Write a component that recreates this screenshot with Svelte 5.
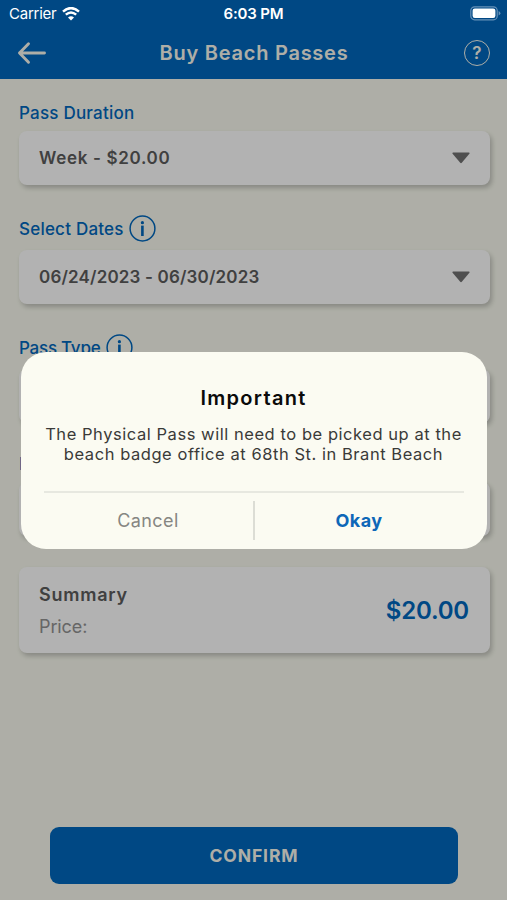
<script lang="ts">
    // Single selectable field shown on the form
    interface PassField {
        label: string,
        value: string,
        hasInfo: boolean,
        size: string
    }

    const fields: PassField[] = [
        { label: "Pass Duration", value: "Week - $20.00", hasInfo: false, size: "duration" },
        { label: "Select Dates", value: "06/24/2023 - 06/30/2023", hasInfo: true, size: "dates" },
        { label: "Pass Type", value: "", hasInfo: true, size: "type" },
        { label: "No.", value: "", hasInfo: false, size: "amount" }
    ];

    const price = "$20.00";

    let dialogOpen = true;

    function closeDialog() {
        dialogOpen = false;
    }
</script>

<div class="screen">
    <!-- System status bar stays above the dimmed page -->
    <div class="status-bar">
        <div class="carrier">
            <span>Carrier</span>
            <svg width="18" height="14" viewBox="0 0 18 14" fill="none" stroke="white">
                <path d="M1 4.6 Q9 -2.4 17 4.6" stroke-width="2.5" />
                <path d="M3.8 7.7 Q9 3.1 14.2 7.7" stroke-width="2.4" />
                <path d="M9 13.6 L6 10.6 Q9 8 12 10.6 Z" fill="white" stroke="none" />
            </svg>
        </div>
        <span class="time">6:03 PM</span>
        <svg class="battery" width="31" height="15" viewBox="0 0 31 15">
            <rect x="0.8" y="0.8" width="26.4" height="13" rx="3.8" fill="none" stroke="#6691b8" stroke-width="1.2" />
            <rect x="2.6" y="2.6" width="22.8" height="9.4" rx="2.2" fill="white" />
            <path d="M28.6 5 Q30.4 5.8 30.4 7.3 Q30.4 8.8 28.6 9.6 Z" fill="#6691b8" />
        </svg>
    </div>

    <header>
        <button class="icon-button" aria-label="Back">
            <svg width="30" height="24" viewBox="0 0 30 24" fill="none" stroke="#fafaf0" stroke-width="2.9" stroke-linecap="round" stroke-linejoin="round">
                <path d="M27.5 12 H2.5 M11.5 2.8 L2.5 12 L11.5 21.2" />
            </svg>
        </button>
        <h1>Buy Beach Passes</h1>
        <button class="help" aria-label="Help">?</button>
    </header>

    <main>
        {#each fields as field}
            <div class="field {field.size}">
                <div class="label" class:with-info={field.hasInfo}>
                    <span>{field.label}</span>
                    {#if field.hasInfo}
                        <svg width="27" height="27" viewBox="0 0 27 27">
                            <circle cx="13.5" cy="13.5" r="12.4" fill="none" stroke="#0067bd" stroke-width="1.5" />
                            <rect x="12.1" y="10.6" width="2.6" height="10.4" fill="#0067bd" />
                            <circle cx="13.4" cy="7.7" r="1.6" fill="#0067bd" />
                        </svg>
                    {/if}
                </div>
                <div class="card select">
                    <span>{field.value}</span>
                    <svg width="18" height="12" viewBox="0 0 18 12">
                        <path d="M1 0.5 H17 Q18 0.8 17.4 1.7 L10 10.6 Q9 11.8 8 10.6 L0.6 1.7 Q0 0.8 1 0.5 Z" fill="#727272" />
                    </svg>
                </div>
            </div>
        {/each}

        <div class="card summary">
            <div class="texts">
                <h2>Summary</h2>
                <p>Price:</p>
            </div>
            <span class="price">{price}</span>
        </div>
    </main>

    <button class="confirm">CONFIRM</button>

    {#if dialogOpen}
        <div class="backdrop">
            <div class="dialog" role="dialog">
                <h3>Important</h3>
                <p>The Physical Pass will need to be picked up at the<br>beach badge office at 68th St. in Brant Beach</p>
                <div class="actions">
                    <button class="cancel" on:click={closeDialog}>Cancel</button>
                    <button class="okay" on:click={closeDialog}>Okay</button>
                </div>
            </div>
        </div>
    {/if}
</div>

<style>
    :global(body) {
        margin: 0;
    }

    .screen {
        position: relative;
        width: 100%;
        height: 900px;
        display: flex;
        flex-direction: column;
        overflow: hidden;
        background-color: #f9faef;
        font-family: Inter, "Liberation Sans", sans-serif;
    }

    h1, h2, h3, p {
        margin: 0;
    }

    button {
        padding: 0;
        border: none;
        background: none;
        font-family: inherit;
    }

    .status-bar {
        position: absolute;
        inset: 0 0 auto 0;
        z-index: 2;
        height: 27px;
        padding: 0 6px 0 9px;
        box-sizing: border-box;
        display: grid;
        grid-template-columns: 1fr auto 1fr;
        align-items: center;
        color: white;
        font-size: 15px;
    }

    .carrier {
        display: flex;
        align-items: center;
        gap: 6px;
        letter-spacing: -0.25px;
    }

    .time {
        margin-right: 3px;
        font-weight: 600;
        letter-spacing: -0.15px;
    }

    .battery {
        justify-self: end;
    }

    header {
        height: 79px;
        padding: 26px 17px 0;
        box-sizing: border-box;
        display: flex;
        align-items: center;
        justify-content: space-between;
        background-color: #0067bd;
        flex-shrink: 0;
    }

    .icon-button {
        display: flex;
    }

    h1 {
        margin-right: 3px;
        color: #fafaf0;
        font-size: 20px;
        font-weight: 600;
        letter-spacing: 0.75px;
    }

    .help {
        width: 26px;
        height: 26px;
        box-sizing: border-box;
        border: solid 1.5px #fafaf0;
        border-radius: 50%;
        color: #fafaf0;
        font-size: 17px;
        font-weight: 600;
        line-height: 22px;
    }

    main {
        flex: 1;
        padding: 23px 17px 0 19px;
        display: flex;
        flex-direction: column;
        gap: 30.8px;
    }

    .label {
        height: 22px;
        margin-bottom: 7px;
        display: flex;
        align-items: center;
        gap: 5px;
        color: #0067bd;
        font-size: 17px;
        font-weight: 500;
        letter-spacing: 0.22px;
    }

    .label.with-info {
        height: 26px;
        margin-bottom: 8px;
    }

    .type .label {
        gap: 6px;
        letter-spacing: -0.25px;
    }

    .card {
        box-sizing: border-box;
        display: flex;
        align-items: center;
        justify-content: space-between;
        background-color: white;
        border-radius: 8px;
        box-shadow: 2px 3px 5px rgba(0, 0, 0, 0.22);
    }

    .select {
        height: 54px;
        padding: 0 20px;
        color: #5c5c5c;
        font-size: 17px;
        font-weight: 600;
        letter-spacing: 0.17px;
    }

    .duration .select {
        letter-spacing: 0.68px;
    }

    .summary {
        height: 86px;
        padding: 1px 21px 0 20px;
    }

    .summary h2 {
        color: #5c5c5c;
        font-size: 18px;
        font-weight: 600;
        line-height: 32px;
        letter-spacing: 0.75px;
    }

    .summary p {
        color: #929292;
        font-size: 18px;
        line-height: 32px;
        letter-spacing: -0.1px;
    }

    .price {
        color: #0067bd;
        font-size: 24px;
        font-weight: 600;
        letter-spacing: -0.2px;
    }

    .confirm {
        height: 57px;
        margin: 0 49px 16px 50px;
        background-color: #0067bd;
        border-radius: 9px;
        color: #fafaf0;
        font-size: 17.5px;
        font-weight: 700;
        letter-spacing: 0.9px;
        flex-shrink: 0;
    }

    .backdrop {
        position: absolute;
        inset: 0;
        display: flex;
        align-items: center;
        justify-content: center;
        background-color: rgba(0, 0, 0, 0.3);
    }

    .dialog {
        width: 466px;
        height: 197px;
        padding: 33px 23px 0;
        box-sizing: border-box;
        display: flex;
        flex-direction: column;
        background-color: #fbfbf2;
        border-radius: 25px;
        text-align: center;
    }

    .dialog h3 {
        color: #0a0a0a;
        font-size: 20px;
        font-weight: 600;
        line-height: 26px;
        letter-spacing: 1.3px;
    }

    .dialog p {
        margin-top: 13px;
        color: #3a3a38;
        font-size: 16.5px;
        line-height: 20px;
        letter-spacing: 0.55px;
        white-space: nowrap;
    }

    .actions {
        margin-top: 27px;
        padding-top: 8px;
        display: flex;
        border-top: solid 2px #e7e8e0;
    }

    .actions button {
        flex: 1;
        height: 39px;
        font-size: 18px;
        letter-spacing: 0.4px;
    }

    .actions .cancel {
        border-right: solid 2px #dcddd5;
        color: #868682;
    }

    .actions .okay {
        color: #0d67b8;
        font-weight: 700;
    }
</style>
